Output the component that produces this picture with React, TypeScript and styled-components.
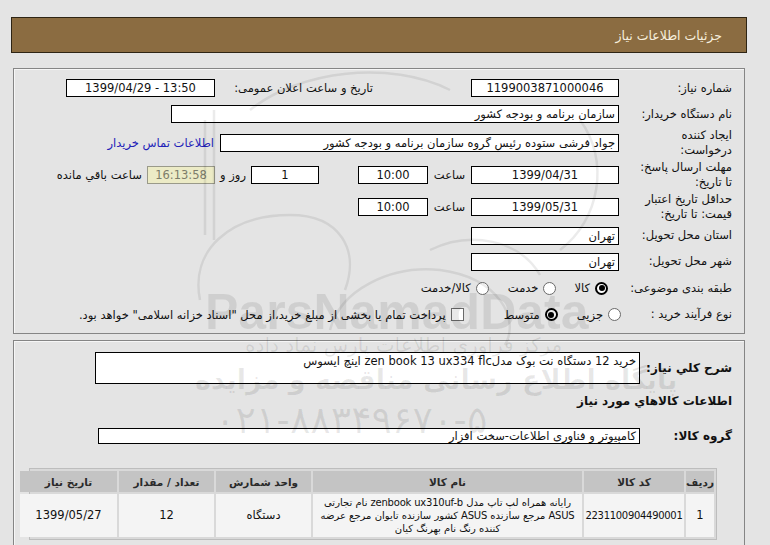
import React from 'react';
import styled, { createGlobalStyle } from 'styled-components';

const GlobalStyle = createGlobalStyle`
  html, body {
    margin: 0;
    padding: 0;
    background: #e4e4e4;
  }
  body {
    font-family: "DejaVu Sans", sans-serif;
    font-size: 11px;
    color: #111;
  }
`;

const Page = styled.div`
  position: relative;
  width: 770px;
  height: 545px;
  overflow: hidden;
  box-sizing: border-box;
  padding: 17px 23px 0 11px;
  direction: rtl;
`;

const TitleBar = styled.div`
  height: 36px;
  box-sizing: border-box;
  background: #8b6c41;
  border: 1px solid #2e2414;
  color: #f7efdd;
  font-size: 12.5px;
  display: flex;
  align-items: center;
  padding-right: 24px;
`;

const Panel = styled.div<{ $top: number; $pad: string; $h?: number }>`
  margin: ${p => p.$top}px 2px 0;
  border: 1px solid #858585;
  box-shadow: inset 1px 1px 0 #f6f6f6;
  padding: ${p => p.$pad};
  ${p => (p.$h ? `height: ${p.$h}px;` : '')}
`;

const Row = styled.div<{ $h: number }>`
  display: flex;
  align-items: center;
  height: ${p => p.$h}px;
`;

const Label = styled.div<{ $w?: number; $bold?: boolean }>`
  width: ${p => p.$w ?? 107}px;
  flex-shrink: 0;
  margin-left: ${p => (p.$w ? 0 : 6)}px;
  line-height: 15px;
  font-size: ${p => (p.$bold ? 12 : 11.5)}px;
  font-weight: ${p => (p.$bold ? 'bold' : 'normal')};
`;

const Field = styled.div<{ $w: number; $h?: number; $align?: string; $before?: number; $timer?: boolean; $ltr?: boolean }>`
  width: ${p => p.$w}px;
  height: ${p => p.$h ?? 18}px;
  box-sizing: border-box;
  flex-shrink: 0;
  margin-right: ${p => p.$before ?? 0}px;
  border: 1px solid ${p => (p.$timer ? '#9a9a8a' : '#000')};
  background: ${p => (p.$timer ? '#ecebc6' : '#fff')};
  color: ${p => (p.$timer ? '#7d7d6a' : '#111')};
  direction: ${p => (p.$ltr ? 'ltr' : 'rtl')};
  text-align: ${p => p.$align ?? 'center'};
  padding: 0 3px;
  line-height: ${p => (p.$h ? p.$h - 2 : 16)}px;
  font-size: 11.5px;
  white-space: nowrap;
  overflow: hidden;
`;

const Note = styled.span<{ $w?: number; $before?: number; $align?: string }>`
  flex-shrink: 0;
  ${p => (p.$w ? `width: ${p.$w}px;` : '')}
  text-align: ${p => p.$align ?? 'center'};
  margin-right: ${p => p.$before ?? 0}px;
  font-size: 11.5px;
  white-space: nowrap;
`;

const ContactLink = styled.a`
  margin-right: 6px;
  color: #2121b8;
  text-decoration: none;
  font-size: 11.5px;
  white-space: nowrap;
`;

const Option = styled.label<{ $before?: number }>`
  display: inline-flex;
  align-items: center;
  gap: 5px;
  margin-right: ${p => p.$before ?? 0}px;
  font-size: 11.5px;
  white-space: nowrap;
`;

const Radio = styled.span<{ $on?: boolean }>`
  position: relative;
  width: 13px;
  height: 13px;
  box-sizing: border-box;
  border-radius: 50%;
  background: #fff;
  border: ${p => (p.$on ? '2px solid #000' : '1px solid #6a6a6a')};
  &::after {
    content: '';
    display: ${p => (p.$on ? 'block' : 'none')};
    position: absolute;
    inset: 1.5px;
    border-radius: 50%;
    background: #000;
  }
`;

const Box = styled.span`
  width: 13px;
  height: 13px;
  box-sizing: border-box;
  border: 1px solid #6a6a6a;
  background: #fff;
`;

const DescBox = styled.div`
  width: 545px;
  height: 32px;
  box-sizing: border-box;
  border: 1px solid #000;
  background: #fff;
  padding: 1px 3px;
  line-height: 15px;
  font-size: 11.5px;
`;

const Heading = styled.div`
  font-size: 12px;
  font-weight: bold;
`;

const Grid = styled.div`
  margin: 14px 15px 0;
  display: grid;
  grid-template-columns: 28px 100px 269px 95px 95px 97px;
  gap: 2px;
  padding: 2px;
  background: #d9d9d9;
  border: 1px solid #bdbdbd;
`;

const HeadCell = styled.div`
  height: 21px;
  background: #c4c4c4;
  display: flex;
  align-items: center;
  justify-content: center;
  font-weight: bold;
  font-size: 10.5px;
  color: #2a2a2a;
  white-space: nowrap;
`;

const Cell = styled.div<{ $tight?: boolean }>`
  height: 43px;
  background: #f4f4f4;
  display: flex;
  flex-direction: column;
  align-items: center;
  justify-content: center;
  font-size: ${p => (p.$tight ? 10 : 11.5)}px;
  letter-spacing: ${p => (p.$tight ? '-0.3px' : 'normal')};
  line-height: 13px;
  text-align: center;
  white-space: nowrap;
  overflow: hidden;
`;

const ProductLine = styled.span`
  font-size: 10px;
  letter-spacing: -0.2px;
`;

const Watermark = styled.div`
  position: absolute;
  inset: 0;
  pointer-events: none;
  z-index: 2;
`;

const MarkText = styled.div<{ $x: number; $y: number; $size: number; $bold?: boolean; $latin?: boolean }>`
  position: absolute;
  left: ${p => p.$x}px;
  top: ${p => p.$y}px;
  font-family: ${p => (p.$latin ? '"Liberation Sans", Arial, sans-serif' : '"DejaVu Sans", sans-serif')};
  font-size: ${p => p.$size}px;
  font-weight: ${p => (p.$bold ? 'bold' : 'normal')};
  color: rgba(0, 0, 0, 0.09);
  white-space: nowrap;
  direction: rtl;
`;

export default function App() {
  return (
    <>
      <GlobalStyle />
      <Page>
        <TitleBar>جزئیات اطلاعات نیاز</TitleBar>

        <Panel $top={15} $pad="6px 12px 6px 14px">
          <Row $h={26}>
            <Label>شماره نیاز:</Label>
            <Field $w={148} $ltr>1199003871000046</Field>
            <Note $w={152} $before={98} $align="right">تاریخ و ساعت اعلان عمومی:</Note>
            <Field $w={149} $before={6} $ltr>1399/04/29 - 13:50</Field>
          </Row>
          <Row $h={26}>
            <Label>نام دستگاه خریدار:</Label>
            <Field $w={448} $align="right">سازمان برنامه و بودجه کشور</Field>
          </Row>
          <Row $h={32}>
            <Label>ایجاد کننده<br />درخواست:</Label>
            <Field $w={399} $align="right">جواد فرشی ستوده رئیس گروه سازمان برنامه و بودجه کشور</Field>
            <ContactLink href="#">اطلاعات تماس خریدار</ContactLink>
          </Row>
          <Row $h={32}>
            <Label>مهلت ارسال پاسخ:<br />تا تاریخ:</Label>
            <Field $w={148} $ltr>1399/04/31</Field>
            <Note $w={43}>ساعت</Note>
            <Field $w={70} $ltr>10:00</Field>
            <Field $w={68} $before={39}>1</Field>
            <Note $w={36}>روز و</Note>
            <Field $w={68} $timer $ltr>16:13:58</Field>
            <Note $before={5}>ساعت باقي مانده</Note>
          </Row>
          <Row $h={31}>
            <Label>حداقل تاریخ اعتبار<br />قیمت: تا تاریخ:</Label>
            <Field $w={148} $ltr>1399/05/31</Field>
            <Note $w={43}>ساعت</Note>
            <Field $w={70} $ltr>10:00</Field>
          </Row>
          <Row $h={27}>
            <Label>استان محل تحویل:</Label>
            <Field $w={148} $align="right">تهران</Field>
          </Row>
          <Row $h={25}>
            <Label>شهر محل تحویل:</Label>
            <Field $w={148} $align="right">تهران</Field>
          </Row>
          <Row $h={28}>
            <Label>طبقه بندی موضوعی:</Label>
            <Option $before={11}><Radio $on />کالا</Option>
            <Option $before={18}><Radio />خدمت</Option>
            <Option $before={19}><Radio />کالا/خدمت</Option>
          </Row>
          <Row $h={25}>
            <Label>نوع فرآیند خرید :</Label>
            <Option $before={-2}><Radio />جزیی</Option>
            <Option $before={19}><Radio $on />متوسط</Option>
            <Option $before={40}><Box />پرداخت تمام یا بخشی از مبلغ خرید،از محل "اسناد خزانه اسلامی" خواهد بود.</Option>
          </Row>
        </Panel>

        <Panel $top={6} $pad="11px 12px 0 0" $h={260}>
          <Row $h={32}>
            <Label $w={92} $bold>شرح کلي نياز:</Label>
            <DescBox>خرید 12 دستگاه نت بوک مدلzen book 13 ux334 flc  اینچ ایسوس</DescBox>
          </Row>
          <Row $h={34}>
            <Heading>اطلاعات کالاهاي مورد نياز</Heading>
          </Row>
          <Row $h={36}>
            <Label $w={92} $bold>گروه کالا:</Label>
            <Field $w={542} $h={16} $align="right">کامپیوتر و فناوری اطلاعات-سخت افزار</Field>
          </Row>
          <Grid>
            <HeadCell>ردیف</HeadCell>
            <HeadCell>کد کالا</HeadCell>
            <HeadCell>نام کالا</HeadCell>
            <HeadCell>واحد شمارش</HeadCell>
            <HeadCell>تعداد / مقدار</HeadCell>
            <HeadCell>تاریخ نیاز</HeadCell>
            <Cell>1</Cell>
            <Cell $tight>2231100904490001</Cell>
            <Cell>
              <ProductLine>رایانه همراه لپ تاپ مدل zenbook ux310uf-b نام تجارتی</ProductLine>
              <ProductLine>ASUS مرجع سازنده ASUS کشور سازنده تایوان مرجع عرضه</ProductLine>
              <ProductLine>کننده رنگ نام بهرنگ کیان</ProductLine>
            </Cell>
            <Cell>دستگاه</Cell>
            <Cell>12</Cell>
            <Cell>1399/05/27</Cell>
          </Grid>
        </Panel>

        <Watermark>
          <svg width="770" height="545" viewBox="0 0 770 545" fill="none" stroke="rgba(0,0,0,0.08)" strokeWidth="2.5">
            <path d="M205 120 L205 235" />
            <path d="M214 110 L214 240" />
            <path d="M200 300 C190 250 230 215 290 215 C340 215 360 250 345 290" />
            <path d="M330 330 C340 290 390 265 440 270 C500 278 520 320 505 345" />
            <path d="M250 110 C300 70 390 60 450 90" />
            <path d="M560 250 C600 220 610 160 580 120" />
            <path d="M430 250 C470 230 520 240 540 275" />
          </svg>
          <MarkText $x={205} $y={283} $size={50} $bold $latin>ParsNamadData</MarkText>
          <MarkText $x={245} $y={333} $size={20}>مرکز فراوری اطلاعات پارس نماد داده</MarkText>
          <MarkText $x={195} $y={364} $size={27} $bold>پایگاه اطلاع رسانی مناقصه و مزایده</MarkText>
          <MarkText $x={215} $y={398} $size={38}>۰۲۱-۸۸۳۴۹۶۷۰-۵</MarkText>
        </Watermark>
      </Page>
    </>
  );
}
